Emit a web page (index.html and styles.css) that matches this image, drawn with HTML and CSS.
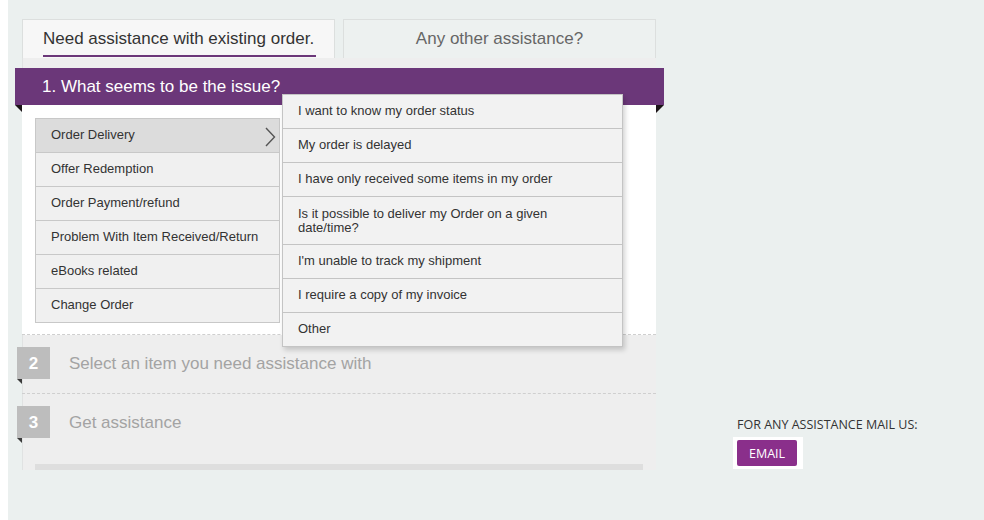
FILE: index.html
```html
<!DOCTYPE html>
<html>
<head>
<meta charset="utf-8">
<link rel="stylesheet" href="styles.css">
</head>
<body>
<div class="page">
  <div class="main">
    <div class="tabs">
      <div class="tab tab-active"><span class="tab-label">Need assistance with existing order.</span></div>
      <div class="tab tab-other">Any other assistance?</div>
    </div>
    <div class="panel">
      <div class="issue-header">1. What seems to be the issue?</div>
      <div class="issue-body">
        <ul class="menu">
          <li class="menu-item active">Order Delivery
            <svg class="chev" width="12" height="20" viewBox="0 0 12 20"><polyline points="2,1 10.5,10 2,19" fill="none" stroke="#555" stroke-width="1.4"/></svg>
          </li>
          <li class="menu-item">Offer Redemption</li>
          <li class="menu-item">Order Payment/refund</li>
          <li class="menu-item">Problem With Item Received/Return</li>
          <li class="menu-item">eBooks related</li>
          <li class="menu-item">Change Order</li>
        </ul>
        <ul class="dropdown">
          <li class="dd-item">I want to know my order status</li>
          <li class="dd-item">My order is delayed</li>
          <li class="dd-item">I have only received some items in my order</li>
          <li class="dd-item dd-tall">Is it possible to deliver my Order on a given date/time?</li>
          <li class="dd-item">I'm unable to track my shipment</li>
          <li class="dd-item">I require a copy of my invoice</li>
          <li class="dd-item">Other</li>
        </ul>
      </div>
      <div class="step step-2">
        <div class="step-num">2</div>
        <div class="step-text">Select an item you need assistance with</div>
      </div>
      <div class="step step-3">
        <div class="step-num">3</div>
        <div class="step-text">Get assistance</div>
      </div>
      <div class="panel-bar"></div>
    </div>
  </div>
  <div class="side">
    <div class="side-label">FOR ANY ASSISTANCE MAIL US:</div>
    <div class="email-wrap"><a class="email-btn" href="#">EMAIL</a></div>
  </div>
</div>
</body>
</html>
```

FILE: styles.css
```css
* { box-sizing: border-box; }
html, body { margin: 0; padding: 0; background: #fff; }
body { padding-left: 8px; font-family: "Liberation Sans", Arial, sans-serif; }

.page {
  background: #ebf0ef;
  height: 520px;
  display: flex;
  align-items: flex-start;
  padding: 19px 0 0 14px;
}

.main { width: 634px; }

.tabs { display: flex; gap: 8px; }
.tab {
  width: 313px;
  height: 39px;
  border: 1px solid #dcdfde;
  border-bottom: none;
  font-size: 17px;
  line-height: 20px;
  padding-top: 9px;
}
.tab-active { background: #f7f7f7; padding-left: 20px; color: #333; }
.tab-label {
  display: inline-block;
  padding: 0 2px 6px 0;
  border-bottom: 2px solid #6b3779;
}
.tab-other { background: #edf1f0; color: #666; text-align: center; }

.panel {
  background: #eeeeee;
  padding-top: 10px;
  height: 412px;
  box-shadow: inset 1px 0 #e0e2e2;
}

.issue-header {
  position: relative;
  margin: 0 -8px 0 -7px;
  height: 37px;
  line-height: 37px;
  padding-left: 27px;
  background: #6b3779;
  color: #fff;
  font-size: 17px;
}
.issue-header::before,
.issue-header::after {
  content: "";
  position: absolute;
  top: 100%;
  width: 0;
  height: 0;
}
.issue-header::before {
  left: 0;
  border-top: 7px solid #1c1418;
  border-left: 7px solid transparent;
}
.issue-header::after {
  right: 0;
  border-top: 8px solid #1c1418;
  border-right: 8px solid transparent;
}

.issue-body {
  position: relative;
  background: #fff;
  padding: 13px 0 11px 13px;
  border-bottom: 1px dashed #cfcfcf;
  height: 230px;
}

.menu, .dropdown { list-style: none; margin: 0; padding: 0; }

.menu {
  width: 245px;
  border: 1px solid #c8c8c8;
  border-bottom: none;
}
.menu-item {
  position: relative;
  height: 34px;
  line-height: 32px;
  border-bottom: 1px solid #c8c8c8;
  background: #f0f0f0;
  padding-left: 15px;
  font-size: 13px;
  color: #333;
}
.menu-item.active { background: #dcdcdc; }
.chev { position: absolute; right: 3px; top: 8px; }

.dropdown {
  position: absolute;
  left: 260px;
  top: -11px;
  width: 341px;
  border: 1px solid #c4c4c4;
  border-bottom: none;
  background: #f2f2f2;
  box-shadow: 2px 3px 5px rgba(0, 0, 0, 0.18);
  z-index: 2;
}
.dd-item {
  height: 34px;
  line-height: 32px;
  border-bottom: 1px solid #c4c4c4;
  padding: 0 20px 0 15px;
  font-size: 13px;
  color: #333;
}
.dd-item.dd-tall {
  height: 48px;
  line-height: 14px;
  padding-top: 10px;
}

.step {
  display: flex;
  align-items: flex-start;
  padding-top: 12px;
}
.step-2 { height: 59px; border-bottom: 1px dashed #cfcfcf; }
.step-3 { height: 70px; }
.step-num {
  position: relative;
  width: 33px;
  height: 32px;
  margin-left: -5px;
  background: #bdbdbd;
  color: #fff;
  font-weight: bold;
  font-size: 17px;
  line-height: 33px;
  text-align: center;
}
.step-num::after {
  content: "";
  position: absolute;
  left: 0;
  top: 100%;
  width: 0;
  height: 0;
  border-top: 5px solid #3a3a3a;
  border-left: 5px solid transparent;
}
.step-text {
  margin-left: 19px;
  padding-top: 1px;
  font-size: 17px;
  line-height: 32px;
  color: #a3a3a3;
}

.panel-bar {
  height: 6px;
  margin: 0 13px;
  background: #dedede;
}

.side {
  margin-left: 81px;
  padding-top: 398px;
  font-family: "Open Sans", sans-serif;
}
.side-label {
  font-size: 12.5px;
  line-height: 16px;
  color: #333;
}
.email-wrap {
  display: inline-block;
  margin: 4px 0 0 -4px;
  padding: 3px 6px 3px 4px;
  background: #fff;
}
.email-btn {
  display: block;
  width: 60px;
  height: 26px;
  line-height: 27px;
  border-radius: 2px;
  background: #8a2f8b;
  color: #fff;
  text-align: center;
  font-size: 12.5px;
  text-decoration: none;
}
```
